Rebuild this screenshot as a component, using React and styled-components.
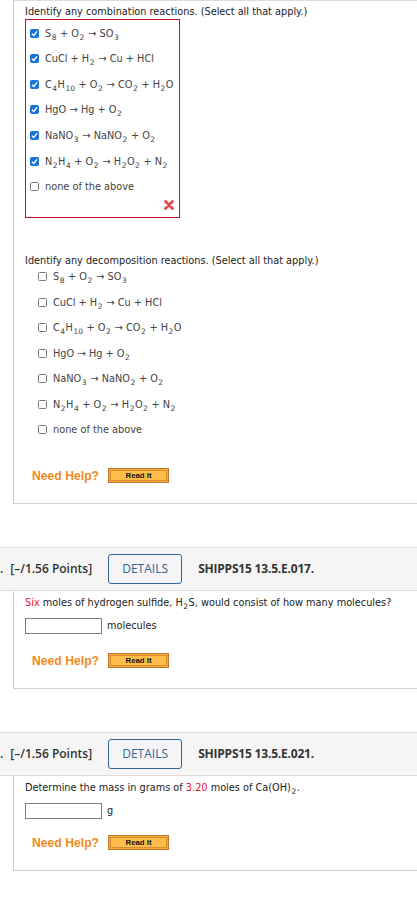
import React from "react";
import styled, { createGlobalStyle } from "styled-components";

const GlobalStyle = createGlobalStyle`
  html, body {
    margin: 0;
    padding: 0;
    background: #fff;
    overflow-x: hidden;
  }
  body {
    width: 417px;
    font-family: "DejaVu Sans", Verdana, sans-serif;
  }
`;

const Page = styled.div`
  width: 417px;
`;

const Panel = styled.div`
  margin-left: 13px;
  border-left: 1px solid #cfcfcf;
  border-bottom: 1px solid #cfcfcf;
  border-top: ${(p) => (p.$top ? "1px solid #dcdcdc" : "none")};
  padding: ${(p) => (p.$top ? "4px" : "5px")} 0 19px 11px;
  margin-bottom: 43px;
`;

const Question = styled.div`
  font-size: 9.75px;
  line-height: 14px;
  color: #222;
  white-space: nowrap;
  margin-top: ${(p) => p.$mt || 0}px;
`;

const Red = styled.span`
  color: #e5142c;
`;

const Sub = styled.sub`
  font-size: 7.5px;
  vertical-align: -3px;
  line-height: 0;
  margin: 0 0.5px;
`;

const AnswerBox = styled.div`
  width: 145px;
  border: 1px solid #c3141c;
  padding: 6px 4px 7px 4px;
  display: flex;
  flex-direction: column;
`;

const OptionList = styled.div`
  display: flex;
  flex-direction: column;
  gap: ${(p) => p.$gap}px;
  padding-left: ${(p) => p.$indent || 0}px;
  margin-top: ${(p) => p.$mt || 0}px;
`;

const Option = styled.label`
  display: flex;
  align-items: center;
  gap: 6px;
  height: 14px;
  font-size: 9.75px;
  color: #444;
  white-space: nowrap;
`;

const Box = styled.span`
  width: 9px;
  height: 9px;
  border-radius: 1.5px;
  box-sizing: border-box;
  flex: none;
  display: flex;
  align-items: center;
  justify-content: center;
  background: ${(p) => (p.$checked ? "#1b74d9" : "#fff")};
  border: 1px solid ${(p) => (p.$checked ? "#1b74d9" : "#7a7a7a")};
`;

const Arrow = styled.span`
  font-size: 10px;
`;

const Marker = styled.div`
  align-self: flex-end;
  margin: 6px 1px 0 0;
  width: 10px;
  height: 10px;
  svg {
    display: block;
  }
`;

const HelpRow = styled.div`
  display: flex;
  align-items: center;
  gap: 9px;
  padding-left: 7px;
  margin-top: ${(p) => p.$mt}px;
  height: 16px;
`;

const NeedHelp = styled.span`
  font-family: "Liberation Sans", Arial, sans-serif;
  font-weight: 700;
  font-size: 12.2px;
  color: #f08a1c;
`;

const ReadIt = styled.button`
  width: 61px;
  height: 15px;
  padding: 1px;
  border: 1px solid #c07a2c;
  background: #f7a836;
  display: flex;
  cursor: pointer;
`;

const ReadItInner = styled.span`
  flex: 1;
  border: 1px solid #d68d33;
  background: #ffbd47;
  font-family: "Liberation Sans", Arial, sans-serif;
  font-weight: 700;
  font-size: 7.8px;
  line-height: 9px;
  color: #111;
  text-align: center;
`;

const AnswerRow = styled.div`
  display: flex;
  align-items: center;
  gap: 5px;
  margin-top: 8px;
  font-size: 9.75px;
  color: #222;
`;

const Input = styled.input`
  width: 77px;
  height: 16px;
  box-sizing: border-box;
  border: 1px solid #7d7d7d;
  margin: 0;
  padding: 0;
`;

const Header = styled.div`
  display: flex;
  align-items: center;
  height: 42px;
  background: #f5f5f5;
  border-top: 1px solid #dddddd;
  border-bottom: 1px solid #dddddd;
  font-family: "Open Sans", sans-serif;
  font-size: 12px;
  white-space: nowrap;
`;

const Dot = styled.span`
  font-weight: 600;
  color: #333;
`;

const Points = styled.span`
  margin-left: 7px;
  font-weight: 600;
  color: #333;
`;

const Details = styled.span`
  margin-left: 16px;
  height: 30px;
  width: 74px;
  box-sizing: border-box;
  border: 1px solid #2f6697;
  border-radius: 3px;
  display: flex;
  align-items: center;
  justify-content: center;
  color: #2f6697;
  font-size: 12px;
`;

const Code = styled.span`
  margin-left: 16px;
  font-weight: 700;
  color: #333;
  letter-spacing: -0.2px;
`;

const To = () => <Arrow>{" \u2192 "}</Arrow>;

const equations = [
  <>S<Sub>8</Sub> + O<Sub>2</Sub><To />SO<Sub>3</Sub></>,
  <>CuCl + H<Sub>2</Sub><To />Cu + HCl</>,
  <>C<Sub>4</Sub>H<Sub>10</Sub> + O<Sub>2</Sub><To />CO<Sub>2</Sub> + H<Sub>2</Sub>O</>,
  <>HgO<To />Hg + O<Sub>2</Sub></>,
  <>NaNO<Sub>3</Sub><To />NaNO<Sub>2</Sub> + O<Sub>2</Sub></>,
  <>N<Sub>2</Sub>H<Sub>4</Sub> + O<Sub>2</Sub><To />H<Sub>2</Sub>O<Sub>2</Sub> + N<Sub>2</Sub></>,
  <>none of the above</>,
];

const Check = ({ checked }) => (
  <Box $checked={checked}>
    {checked && (
      <svg width="7" height="7" viewBox="0 0 7 7">
        <path d="M1 3.7 L2.8 5.4 L6 1.4" stroke="#fff" strokeWidth="1.4" fill="none" />
      </svg>
    )}
  </Box>
);

const WrongMark = () => (
  <Marker>
    <svg width="10" height="10" viewBox="0 0 10 10">
      <path d="M1.5 1.5 L8.5 8.5 M8.5 1.5 L1.5 8.5" stroke="#e2474d" strokeWidth="2.8" strokeLinecap="round" />
    </svg>
  </Marker>
);

const Help = ({ mt }) => (
  <HelpRow $mt={mt}>
    <NeedHelp>Need Help?</NeedHelp>
    <ReadIt>
      <ReadItInner>Read It</ReadItInner>
    </ReadIt>
  </HelpRow>
);

const QHeader = ({ code }) => (
  <Header>
    <Dot>.</Dot>
    <Points>[–/1.56 Points]</Points>
    <Details>DETAILS</Details>
    <Code>{code}</Code>
  </Header>
);

export default function App() {
  return (
    <Page>
      <GlobalStyle />
      <Panel $top>
        <Question>Identify any combination reactions. (Select all that apply.)</Question>
        <AnswerBox>
          <OptionList $gap={11.67}>
            {equations.map((eq, i) => (
              <Option key={i}>
                <Check checked={i < 6} />
                <span>{eq}</span>
              </Option>
            ))}
          </OptionList>
          <WrongMark />
        </AnswerBox>
        <Question $mt={36}>Identify any decomposition reactions. (Select all that apply.)</Question>
        <OptionList $gap={11.5} $indent={13} $mt={2}>
          {equations.map((eq, i) => (
            <Option key={i}>
              <Check checked={false} />
              <span>{eq}</span>
            </Option>
          ))}
        </OptionList>
        <Help mt={31} />
      </Panel>

      <QHeader code="SHIPPS15 13.5.E.017." />
      <Panel>
        <Question>
          <Red>Six</Red> moles of hydrogen sulfide, H<Sub>2</Sub>S, would consist of how many molecules?
        </Question>
        <AnswerRow>
          <Input type="text" />
          <span>molecules</span>
        </AnswerRow>
        <Help mt={19} />
      </Panel>

      <QHeader code="SHIPPS15 13.5.E.021." />
      <Panel>
        <Question>
          Determine the mass in grams of <Red>3.20</Red> moles of Ca(OH)<Sub>2</Sub>.
        </Question>
        <AnswerRow>
          <Input type="text" />
          <span>g</span>
        </AnswerRow>
        <Help mt={16} />
      </Panel>
    </Page>
  );
}
